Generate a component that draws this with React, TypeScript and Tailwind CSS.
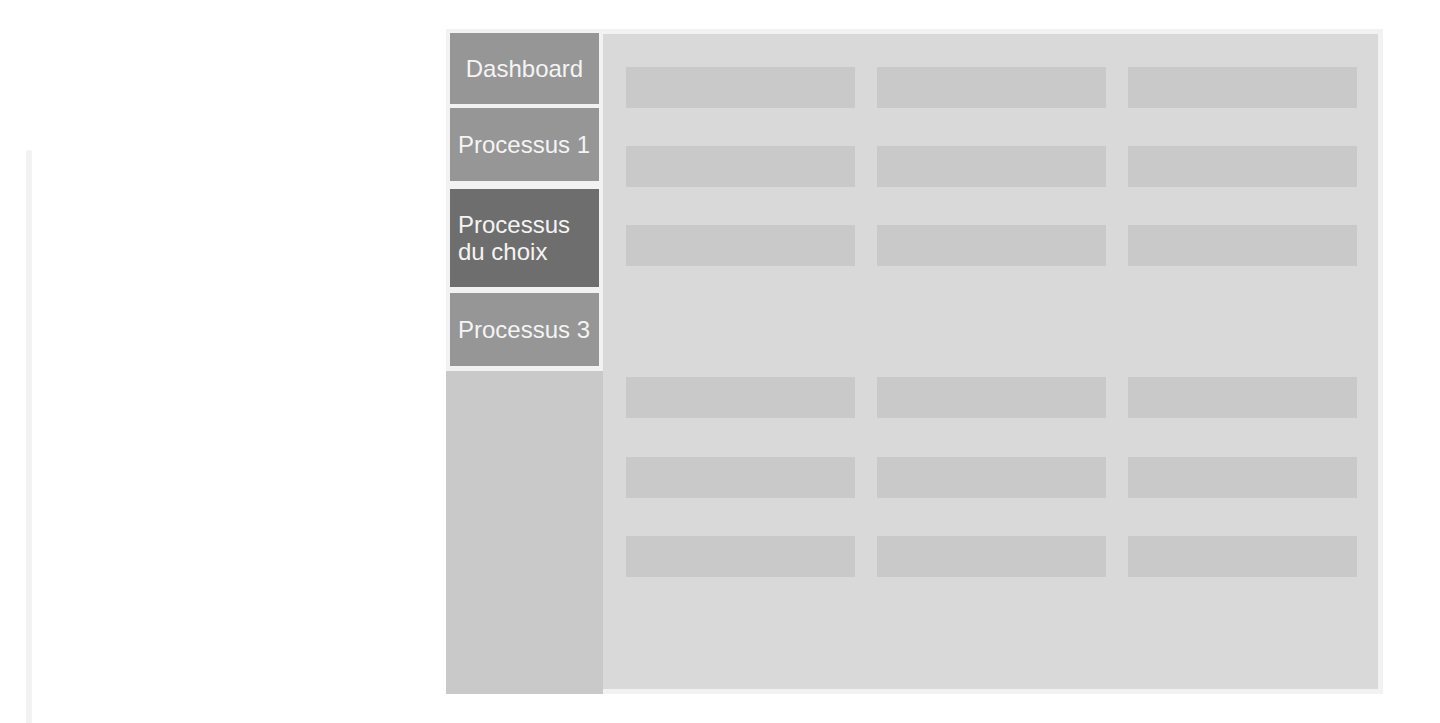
import React from "react";

const Cell = () => <div className="h-[41px] w-[229px] bg-[#c9c9c9]" />;

const Row = ({ mt }: { mt: string }) => (
  <div className={`flex gap-[22px] ${mt}`}>
    <Cell />
    <Cell />
    <Cell />
  </div>
);

export default function App() {
  return (
    <div
      className="relative flex h-[723px] w-[1440px] overflow-hidden bg-white"
      style={{ fontFamily: '"Liberation Sans", Arial, sans-serif' }}
    >
      <div className="ml-[26px] mt-[150px] h-[573px] w-[6px] rounded-t-[3px] bg-[#f2f2f2]" />
      <div className="ml-[414px] mt-[29px] flex h-[665px] w-[937px] bg-[#f2f2f2]">
        <div className="flex w-[157px] flex-col">
          <div className="flex flex-col px-[4px] pt-[4px]">
            <div className="flex h-[71px] items-center justify-center bg-[#969696] text-[24px] text-[#f4f4f4]">
              Dashboard
            </div>
            <div className="mt-[4px] flex h-[73px] items-center bg-[#969696] pl-[8px] text-[24px] text-[#f4f4f4]">
              Processus 1
            </div>
            <div className="mt-[8px] flex h-[98px] items-center bg-[#6e6e6e] pl-[8px] text-[24px] leading-[27px] text-[#f4f4f4]">
              <span>
                Processus
                <br />
                du choix
              </span>
            </div>
            <div className="mt-[6px] flex h-[73px] items-center bg-[#969696] pl-[8px] text-[24px] text-[#f4f4f4]">
              Processus 3
            </div>
          </div>
          <div className="mt-[5px] flex-1 bg-[#c9c9c9]" />
        </div>
        <div className="mt-[5px] h-[655px] w-[775px] bg-[#d9d9d9] pl-[23px] pt-[33px]">
          <Row mt="" />
          <Row mt="mt-[38px]" />
          <Row mt="mt-[38px]" />
          <Row mt="mt-[111px]" />
          <Row mt="mt-[39px]" />
          <Row mt="mt-[38px]" />
        </div>
      </div>
    </div>
  );
}
